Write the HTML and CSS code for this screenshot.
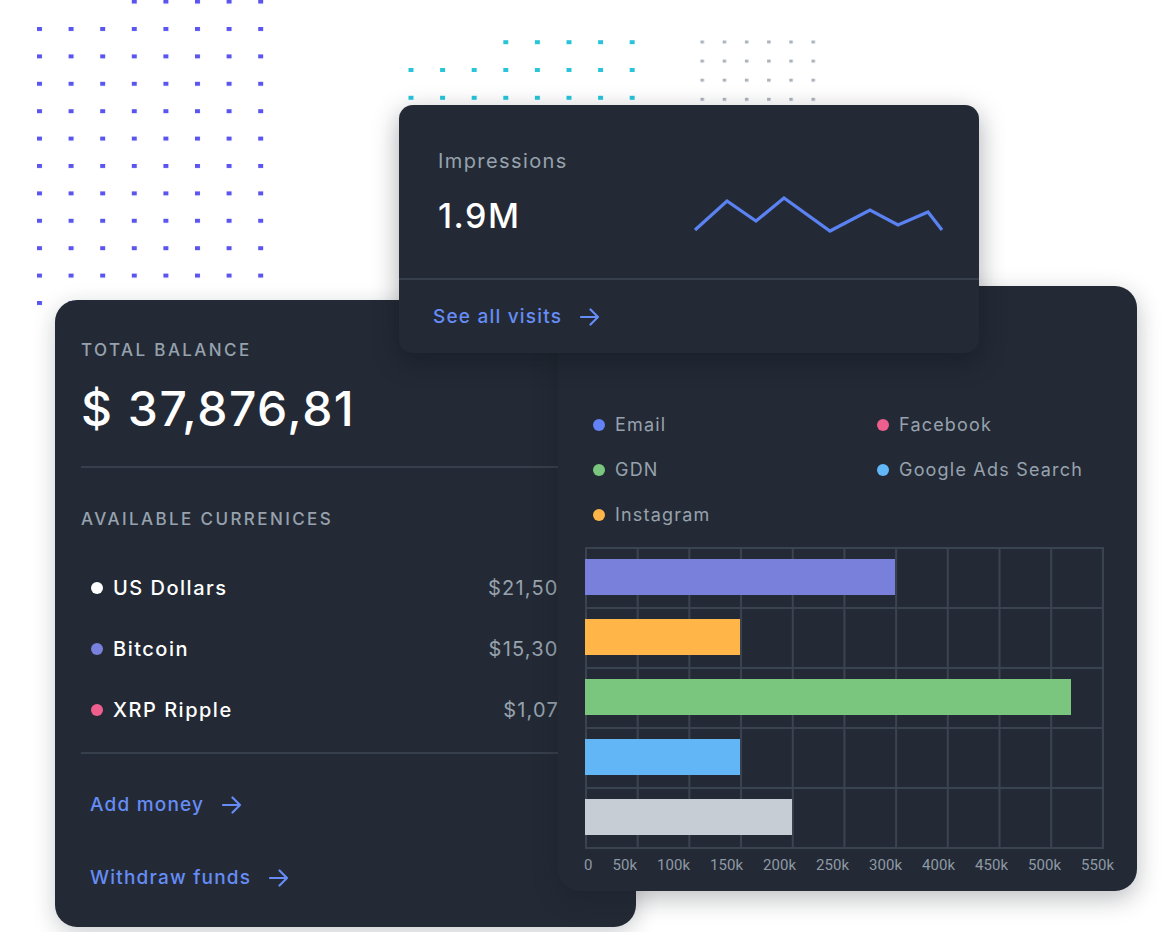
FILE: index.html
```html
<!DOCTYPE html>
<html lang="en">
<head>
<meta charset="utf-8">
<title>Dashboard cards</title>
<link rel="stylesheet" href="styles.css">
</head>
<body>
<div class="canvas">
  <svg class="dots" width="1176" height="932" viewBox="0 0 1176 932" aria-hidden="true">
    <defs>
      <pattern id="pp" x="37" y="27" width="31.6" height="27.4" patternUnits="userSpaceOnUse">
        <rect x="0" y="0" width="5" height="4" fill="#5b55f0"/>
      </pattern>
      <pattern id="pc" x="408.5" y="40.2" width="31.6" height="27.8" patternUnits="userSpaceOnUse">
        <rect x="0" y="0" width="5" height="4" fill="#27c4da"/>
      </pattern>
      <pattern id="pg" x="700.5" y="40.5" width="22.2" height="19.1" patternUnits="userSpaceOnUse">
        <rect x="0" y="0" width="3.5" height="3" fill="#aab2bc"/>
      </pattern>
    </defs>
    <rect x="130" y="0" width="135" height="5" fill="url(#pp)"/>
    <rect x="36" y="27" width="253" height="285" fill="url(#pp)"/>
    <rect x="500" y="40" width="140" height="6" fill="url(#pc)"/>
    <rect x="408" y="67" width="240" height="36" fill="url(#pc)"/>
    <rect x="700" y="40" width="125" height="65" fill="url(#pg)"/>
  </svg>

  <section class="card balance">
    <div class="eyebrow">Total balance</div>
    <div class="total">$ 37,876,81</div>
    <div class="divider"></div>
    <div class="eyebrow eyebrow-2">Available currenices</div>
    <ul class="currencies">
      <li class="currency"><span class="dot dot-white"></span><span class="cur-name">US Dollars</span><span class="cur-amount">$21,500.00</span></li>
      <li class="currency"><span class="dot dot-purple"></span><span class="cur-name">Bitcoin</span><span class="cur-amount">$15,300.00</span></li>
      <li class="currency"><span class="dot dot-pink"></span><span class="cur-name">XRP Ripple</span><span class="cur-amount">$1,070.00</span></li>
    </ul>
    <div class="divider divider-2"></div>
    <div class="links">
      <a class="link" href="#">Add money
        <svg class="arrow" width="20" height="18" viewBox="0 0 20 18"><path d="M1 9h17M10.5 1.5L18 9l-7.5 7.5" fill="none" stroke="currentColor" stroke-width="2.2" stroke-linecap="round" stroke-linejoin="round"/></svg>
      </a>
      <a class="link" href="#">Withdraw funds
        <svg class="arrow" width="20" height="18" viewBox="0 0 20 18"><path d="M1 9h17M10.5 1.5L18 9l-7.5 7.5" fill="none" stroke="currentColor" stroke-width="2.2" stroke-linecap="round" stroke-linejoin="round"/></svg>
      </a>
    </div>
  </section>

  <section class="card chart">
    <ul class="legend">
      <li class="legend-item"><span class="ldot" style="background:#6183f7"></span>Email</li>
      <li class="legend-item"><span class="ldot" style="background:#ee5f8d"></span>Facebook</li>
      <li class="legend-item"><span class="ldot" style="background:#7bc67e"></span>GDN</li>
      <li class="legend-item"><span class="ldot" style="background:#61b7f7"></span>Google Ads Search</li>
      <li class="legend-item"><span class="ldot" style="background:#ffb547"></span>Instagram</li>
    </ul>
    <div class="plot">
      <div class="plot-row"><div class="bar" style="width:60%;background:#7880db"></div></div>
      <div class="plot-row"><div class="bar" style="width:30%;background:#ffb547"></div></div>
      <div class="plot-row"><div class="bar" style="width:94%;background:#7bc67e"></div></div>
      <div class="plot-row"><div class="bar" style="width:30%;background:#63b6f6"></div></div>
      <div class="plot-row"><div class="bar" style="width:40%;background:#c6cdd5"></div></div>
    </div>
    <div class="axis">
      <span>0</span><span>50k</span><span>100k</span><span>150k</span><span>200k</span><span>250k</span><span>300k</span><span>400k</span><span>450k</span><span>500k</span><span>550k</span>
    </div>
  </section>

  <section class="card impressions">
    <div class="imp-top">
      <div class="imp-text">
        <div class="imp-label">Impressions</div>
        <div class="imp-value">1.9M</div>
      </div>
      <svg class="spark" width="252" height="44" viewBox="0 0 252 44">
        <polyline points="3,37 35,8 64,28 92,5 138,38 178,17 206,32 236,19 250,37" fill="none" stroke="#5b82f2" stroke-width="3.2" stroke-linejoin="miter"/>
      </svg>
    </div>
    <div class="imp-footer">
      <a class="link" href="#">See all visits
        <svg class="arrow" width="20" height="18" viewBox="0 0 20 18"><path d="M1 9h17M10.5 1.5L18 9l-7.5 7.5" fill="none" stroke="currentColor" stroke-width="2.2" stroke-linecap="round" stroke-linejoin="round"/></svg>
      </a>
    </div>
  </section>
</div>
</body>
</html>
```

FILE: styles.css
```css
* { box-sizing: border-box; }
html, body { margin: 0; padding: 0; background: #ffffff; }
body { font-family: Inter, "Noto Sans", "Liberation Sans", sans-serif; }

.canvas {
  position: relative;
  width: 1176px;
  height: 932px;
  overflow: hidden;
  background: #ffffff;
}

.dots { position: absolute; left: 0; top: 0; }

.card {
  position: absolute;
  background: #232a35;
  color: #ffffff;
}

/* ---------- balance card ---------- */
.balance {
  left: 55px;
  top: 300px;
  width: 581px;
  height: 627px;
  border-radius: 22px;
  padding: 38px 26px 0 26px;
  box-shadow: 0 6px 22px rgba(20, 26, 36, 0.22);
  z-index: 1;
}
.eyebrow {
  font-size: 17px;
  line-height: 24px;
  letter-spacing: 2.4px;
  text-transform: uppercase;
  color: #97a2ae;
  font-weight: 500;
}
.total {
  margin-top: 18px;
  font-size: 48px;
  line-height: 58px;
  font-weight: 500;
  color: #ffffff;
  letter-spacing: 1.5px;
}
.divider {
  margin-top: 28px;
  height: 2px;
  background: #363f4b;
}
.eyebrow-2 { margin-top: 39px; }
.currencies {
  list-style: none;
  margin: 26px 0 0 0;
  padding: 0;
}
.currency {
  display: flex;
  align-items: center;
  height: 61px;
  padding: 0 4px 0 10px;
  gap: 10px;
}
.dot {
  width: 12px;
  height: 12px;
  border-radius: 50%;
  flex: none;
}
.dot-white { background: #ffffff; }
.dot-purple { background: #7881dc; }
.dot-pink { background: #ef5f8e; }
.cur-name {
  font-size: 20px;
  font-weight: 500;
  letter-spacing: 1.5px;
  color: #ffffff;
}
.cur-amount {
  margin-left: auto;
  font-size: 20px;
  color: #97a2ae;
  letter-spacing: 1.2px;
}
.divider-2 { margin-top: 12px; }
.links {
  display: flex;
  flex-direction: column;
  align-items: flex-start;
  gap: 45px;
  padding: 37px 0 0 9px;
}
.link {
  display: inline-flex;
  align-items: center;
  gap: 18px;
  font-size: 19px;
  line-height: 28px;
  font-weight: 500;
  letter-spacing: 1.2px;
  color: #668cf6;
  text-decoration: none;
}
.arrow { display: block; flex: none; }

/* ---------- chart card ---------- */
.chart {
  left: 558px;
  top: 286px;
  width: 579px;
  height: 605px;
  border-radius: 22px;
  padding: 116px 0 0 27px;
  box-shadow: 0 8px 24px rgba(20, 26, 36, 0.28);
  z-index: 2;
}
.legend {
  list-style: none;
  margin: 0;
  padding: 0;
  display: grid;
  grid-template-columns: 284px 230px;
}
.legend-item {
  display: flex;
  align-items: center;
  gap: 10px;
  height: 45px;
  padding-left: 8px;
  font-size: 18px;
  letter-spacing: 1.2px;
  color: #97a2ae;
}
.ldot {
  width: 12px;
  height: 12px;
  border-radius: 50%;
  flex: none;
}
.plot {
  margin-top: 10px;
  width: 519px;
  height: 302px;
  border-right: 2px solid #3a4451;
  border-bottom: 2px solid #3a4451;
  background-image:
    linear-gradient(to right, #3a4451 2px, transparent 2px),
    linear-gradient(to bottom, #3a4451 2px, transparent 2px);
  background-size: 10% 100%, 100% 20%;
  display: flex;
  flex-direction: column;
}
.plot-row {
  height: 60px;
  display: flex;
  align-items: center;
}
.bar { height: 36px; }
.axis {
  margin: 7px 0 0 -1px;
  width: 530px;
  display: flex;
  justify-content: space-between;
  font-family: Roboto, "Liberation Sans", sans-serif;
  font-size: 15px;
  line-height: 18px;
  color: #8e99a5;
}

/* ---------- impressions card ---------- */
.impressions {
  left: 399px;
  top: 105px;
  width: 580px;
  height: 248px;
  border-radius: 14px;
  box-shadow: 0 8px 26px rgba(10, 14, 22, 0.35);
  z-index: 3;
}
.imp-top {
  display: flex;
  justify-content: space-between;
  align-items: flex-end;
  padding: 42px 35px 41px 39px;
  border-bottom: 2px solid #363f4b;
}
.imp-label {
  font-size: 20px;
  line-height: 28px;
  color: #97a2ae;
  letter-spacing: 1.4px;
}
.imp-value {
  margin-top: 20px;
  font-size: 34px;
  line-height: 42px;
  font-weight: 500;
  color: #ffffff;
  letter-spacing: 1.5px;
}
.spark { display: block; }
.imp-footer {
  padding: 23px 0 0 34px;
}
```
